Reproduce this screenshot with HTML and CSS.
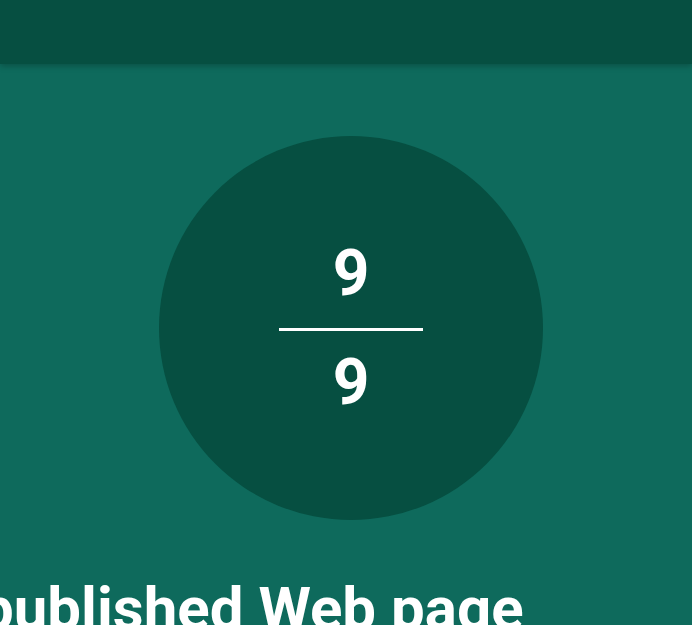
FILE: index.html
```html
<!DOCTYPE html>
<html>
<head>
<meta charset="utf-8">
<link rel="stylesheet" href="styles.css">
</head>
<body>
<header class="topbar"></header>
<main class="content">
  <div class="score">
    <div class="score-num">9</div>
    <div class="score-line"></div>
    <div class="score-num">9</div>
  </div>
  <h1 class="title">published Web page</h1>
</main>
</body>
</html>
```
FILE: styles.css
```css
html, body {
  margin: 0;
  padding: 0;
  height: 100%;
  overflow: hidden;
}
body {
  background: #0e6a5c;
  font-family: Roboto, "Noto Sans", sans-serif;
  color: #ffffff;
}
.topbar {
  height: 64px;
  background: #064f41;
  box-shadow: 0 2px 6px rgba(0, 0, 0, 0.25);
  position: relative;
  z-index: 1;
}
.content {
  display: flex;
  flex-direction: column;
}
.score {
  width: 384px;
  height: 384px;
  border-radius: 50%;
  background: #064f41;
  margin: 72px 0 0 159px;
  display: flex;
  flex-direction: column;
  align-items: center;
  justify-content: center;
}
.score-num {
  font-size: 64px;
  font-weight: 700;
  line-height: 1;
}
.score-line {
  width: 144px;
  height: 3px;
  background: #ffffff;
  margin: 22px 0 20px;
}
.title {
  margin: 53px 0 0 -20px;
  font-size: 60px;
  font-weight: 700;
  line-height: 1.2;
  white-space: nowrap;
}
```
